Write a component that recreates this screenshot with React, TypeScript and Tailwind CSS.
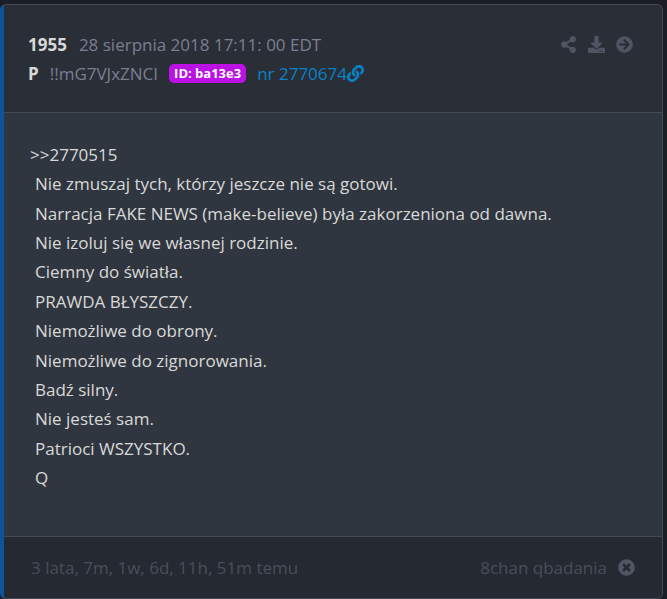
import React from "react";
import {
  FaArrowCircleRight,
  FaDownload,
  FaLink,
  FaShareAlt,
  FaTimesCircle,
} from "react-icons/fa";

const lines: string[] = [
  "Nie zmuszaj tych, którzy jeszcze nie są gotowi.",
  "Narracja FAKE NEWS (make-believe) była zakorzeniona od dawna.",
  "Nie izoluj się we własnej rodzinie.",
  "Ciemny do światła.",
  "PRAWDA BŁYSZCZY.",
  "Niemożliwe do obrony.",
  "Niemożliwe do zignorowania.",
  "Badź silny.",
  "Nie jesteś sam.",
  "Patrioci WSZYSTKO.",
  "Q",
];

function IconButton({ label, children }: { label: string; children: React.ReactNode }) {
  return (
    <button type="button" aria-label={label} className="flex text-[#515563]">
      {children}
    </button>
  );
}

export default function App() {
  return (
    <main className="flex min-h-screen flex-col bg-[#1c1e26] pt-1 pr-1 font-['Open_Sans','Noto_Sans',sans-serif] text-[17px] leading-[29px] text-[#d9d9d9]">
      <article className="flex flex-1 flex-col overflow-hidden rounded-md border border-l-4 border-[#434a54] border-l-[#0f5499] bg-[#2f363f]">
        <header className="flex items-start justify-between border-b border-[#434a54] bg-[#2a2e36] pt-[25px] pr-[29px] pb-6 pl-6">
          <div>
            <div className="flex items-center gap-3">
              <strong className="font-bold">1955</strong>
              <time className="text-[#7b7f91]">28 sierpnia 2018 17:11: 00 EDT</time>
            </div>
            <div className="flex items-center gap-[11px]">
              <strong className="font-bold">P</strong>
              <span className="text-[#7b7f91]">!!mG7VJxZNCI</span>
              <span className="rounded-[5px] bg-[#bb11e5] px-[5px] text-[13px] leading-[19px] font-bold text-white">
                ID: ba13e3
              </span>
              <a href="#2770674" className="flex items-center text-[#0982c8]">
                nr 2770674
                <FaLink size={17} />
              </a>
            </div>
          </div>
          <div className="flex h-[29px] items-center gap-[11px]">
            <IconButton label="Udostępnij"><FaShareAlt size={17} /></IconButton>
            <IconButton label="Pobierz"><FaDownload size={17} /></IconButton>
            <IconButton label="Dalej"><FaArrowCircleRight size={17} /></IconButton>
          </div>
        </header>
        <section className="flex flex-1 flex-col justify-between px-[26px] pt-[27px] pb-11">
          <p>&gt;&gt;2770515</p>
          {lines.map((line) => (
            <p key={line} className="pl-[5px]">{line}</p>
          ))}
        </section>
        <footer className="flex items-center justify-between border-t border-[#434a54] bg-[#252931] px-[27px] py-4 text-[#4b4e5b]">
          <span>3 lata, 7m, 1w, 6d, 11h, 51m temu</span>
          <div className="flex items-center gap-[11px]">
            <span>8chan qbadania</span>
            <IconButton label="Zamknij"><FaTimesCircle size={17} /></IconButton>
          </div>
        </footer>
      </article>
    </main>
  );
}
